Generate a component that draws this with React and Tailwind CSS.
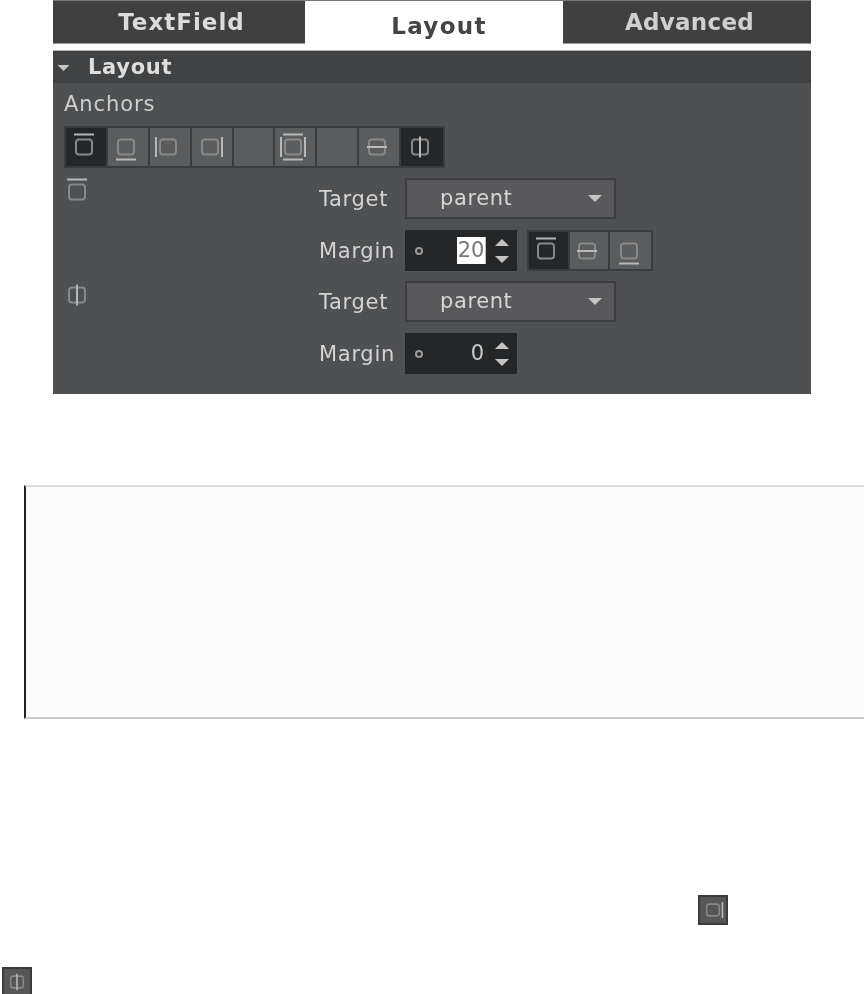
import React from 'react';

const font = { fontFamily: '"DejaVu Sans", "Liberation Sans", sans-serif' };

// anchor glyph: a rounded box with the bars that say which side it is tied to
const AnchorIcon = ({ top, bottom, left, right, hcenter, vcenter, className = 'w-7 h-7', stroke = '#888888' }) => (
  <svg viewBox="0 0 28 28" className={className} fill="none">
    <rect x="6" y="6.5" width="16" height="15" rx="3" stroke={stroke} strokeWidth="2" />
    {top && <path d="M4 1.5H24" stroke="#b8b8b8" strokeWidth="2" />}
    {bottom && <path d="M4 26.5H24" stroke="#b8b8b8" strokeWidth="2" />}
    {left && <path d="M2 4V24" stroke="#b8b8b8" strokeWidth="2" />}
    {right && <path d="M26 4V24" stroke="#b8b8b8" strokeWidth="2" />}
    {hcenter && <path d="M4 14H24" stroke="#b8b8b8" strokeWidth="2" />}
    {vcenter && <path d="M14 3.5V24.5" stroke="#b8b8b8" strokeWidth="2" />}
  </svg>
);

const AnchorButton = ({ active, children }) => (
  <div className={`w-[42px] h-full flex items-center justify-center pr-1 border-r-2 border-[#3a3b3c] last:border-r-0 ${active ? 'bg-[#252628]' : 'bg-[#5b5c5d]'}`}>
    {children}
  </div>
);

const Caret = ({ up, className }) => (
  <svg viewBox="0 0 14 7" className={className}>
    <path d={up ? 'M0 7L7 0L14 7Z' : 'M0 0H14L7 7Z'} fill="#c4c4c4" />
  </svg>
);

const Select = () => (
  <div className="w-[211px] h-[41px] bg-[#59595b] border-2 border-[#3c3d3e] flex items-center justify-between pl-[33px] pr-[12px] text-[#d6d6d6] text-[21px]">
    <span className="tracking-[0.6px]">parent</span>
    <Caret className="w-[14px] h-[7px]" />
  </div>
);

const SpinBox = ({ value, selected }) => (
  <div className="w-[112px] h-[41px] bg-[#252628] flex items-center pl-[10px] pr-[8px] text-[21px] text-[#c9c9c9]">
    <span className="w-2 h-2 rounded-full border-2 border-[#9a9a9a]" />
    <div className="flex-1 flex justify-end pr-[9px]">
      {selected ? (
        <span className="bg-white text-[#777] h-[27px] w-[29px] leading-[27px] text-center border-r border-[#9fc4dc]">{value}</span>
      ) : (
        <span className="pr-[2px]">{value}</span>
      )}
    </div>
    <div className="flex flex-col gap-[10px]">
      <Caret up className="w-[14px] h-[7px]" />
      <Caret className="w-[14px] h-[7px]" />
    </div>
  </div>
);

const Label = ({ children }) => (
  <span className="w-[86px] text-[21px] leading-[28px] pt-[1px] text-[#d4d4d4] tracking-[0.7px]">{children}</span>
);

const AnchorGroup = ({ icon, children }) => (
  <div className="flex">
    <div className="w-[255px] -ml-[1px] mr-[1px]">{icon}</div>
    <div className="flex flex-col gap-[11px]">{children}</div>
  </div>
);

export default function App() {
  return (
    <div style={font} className="w-[864px] h-[994px] bg-white overflow-hidden">
      <div className="ml-[53px] w-[758px] blur-[0.5px]">
        {/* tabs */}
        <div className="h-[51px] flex border-t border-[#777] border-b border-b-[#b5b5b5]">
          <div className="w-[252px] h-[43px] bg-[#404041] border-b border-[#999] flex items-center justify-center pl-[5px] font-bold text-[23px] tracking-[1px] text-[#dcdcdc]">
            TextField
          </div>
          <div className="w-[258px] flex justify-center pl-[10px] pt-[9px] font-bold text-[23px] leading-[32px] tracking-[1.3px] text-[#444]">
            Layout
          </div>
          <div className="flex-1 h-[43px] bg-[#404041] border-b border-[#999] flex items-center justify-center pl-[5px] font-bold text-[23px] tracking-[0.3px] text-[#d0d0d0]">
            Advanced
          </div>
        </div>

        {/* section header */}
        <div className="h-[32px] pt-[1px] bg-[#414243] flex items-center pl-[4px] gap-[18px]">
          <Caret className="w-[13px] h-[6px]" />
          <span className="font-bold text-[21px] tracking-[0.7px] text-[#dedede]">Layout</span>
        </div>

        {/* section body */}
        <div className="h-[311px] bg-[#4f5052] pl-[11px]">
          <div className="pt-[7px] h-[43px] text-[21px] leading-[28px] tracking-[0.9px] text-[#cfcfcf]">Anchors</div>
          <div className="w-[381px] h-[42px] flex bg-[#3a3b3c] border-2 border-[#3a3b3c]">
            <AnchorButton active><AnchorIcon top /></AnchorButton>
            <AnchorButton><AnchorIcon bottom /></AnchorButton>
            <AnchorButton><AnchorIcon left /></AnchorButton>
            <AnchorButton><AnchorIcon right /></AnchorButton>
            <AnchorButton />
            <AnchorButton><AnchorIcon top bottom left right /></AnchorButton>
            <AnchorButton />
            <AnchorButton><AnchorIcon hcenter /></AnchorButton>
            <AnchorButton active><AnchorIcon vcenter /></AnchorButton>
          </div>

          <div className="mt-[10px] flex flex-col gap-[10px]">
            <AnchorGroup icon={<AnchorIcon top />}>
              <div className="flex items-center"><Label>Target</Label><Select /></div>
              <div className="flex items-center">
                <Label>Margin</Label>
                <SpinBox value="20" selected />
                <div className="ml-[10px] w-[126px] h-[41px] flex bg-[#3a3b3c] border-2 border-[#3a3b3c]">
                  <AnchorButton active><AnchorIcon top /></AnchorButton>
                  <AnchorButton><AnchorIcon hcenter /></AnchorButton>
                  <AnchorButton><AnchorIcon bottom /></AnchorButton>
                </div>
              </div>
            </AnchorGroup>
            <AnchorGroup icon={<AnchorIcon vcenter />}>
              <div className="flex items-center"><Label>Target</Label><Select /></div>
              <div className="flex items-center"><Label>Margin</Label><SpinBox value="0" /></div>
            </AnchorGroup>
          </div>
        </div>
      </div>

      {/* empty preview box */}
      <div className="mt-[91px] ml-[24px] h-[234px] bg-[#fbfbfb] border-l-2 border-l-[#222] border-t-2 border-t-[#dddddd] border-b-2 border-b-[#cccccc]" />

      {/* inline icons from the text below */}
      <div className="mt-[176px] ml-[698px] w-[30px] h-[30px] bg-[#565657] border-2 border-[#3a3b3c] flex items-center justify-center blur-[0.4px]">
        <AnchorIcon right className="w-[22px] h-[22px]" />
      </div>
      <div className="mt-[42px] ml-[2px] w-[30px] h-[30px] bg-[#565657] border-2 border-[#3a3b3c] flex items-center justify-center blur-[0.4px]">
        <AnchorIcon vcenter className="w-[22px] h-[22px]" />
      </div>
    </div>
  );
}
